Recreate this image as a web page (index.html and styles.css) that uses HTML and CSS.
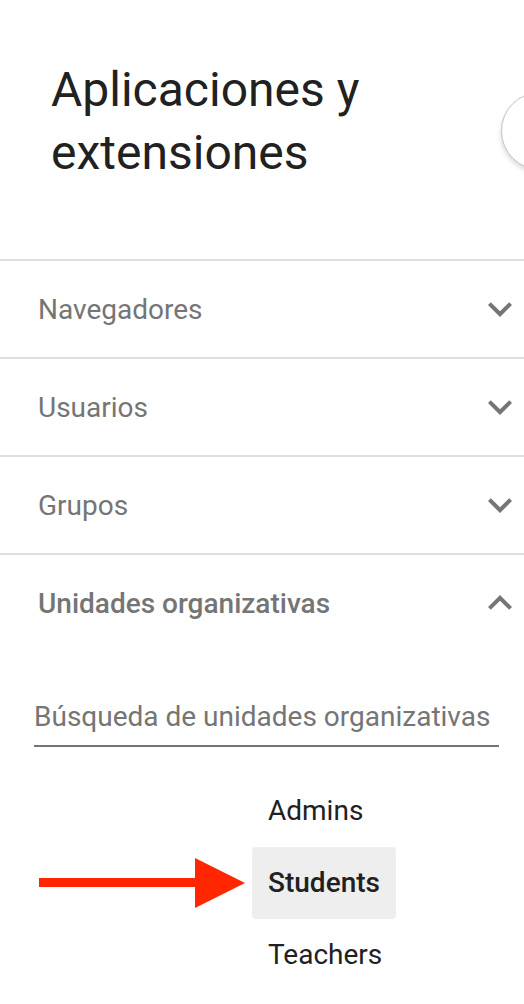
FILE: index.html
```html
<!DOCTYPE html>
<html lang="es">
  <head>
    <meta charset="UTF-8" />
    <meta name="viewport" content="width=device-width, initial-scale=1.0" />
    <title>Aplicaciones y extensiones</title>
    <link rel="stylesheet" href="styles.css">
  </head>
  <body>
    <div class="panel">
      <header class="panel-header">
        <h1>Aplicaciones y extensiones</h1>
        <button class="fab" type="button" aria-label="Más"></button>
      </header>

      <div class="section">
        <span class="section-title">Navegadores</span>
        <svg class="chevron" viewBox="0 0 24 24"><path d="M16.59 8.59L12 13.17 7.41 8.59 6 10l6 6 6-6z" /></svg>
      </div>
      <div class="section">
        <span class="section-title">Usuarios</span>
        <svg class="chevron" viewBox="0 0 24 24"><path d="M16.59 8.59L12 13.17 7.41 8.59 6 10l6 6 6-6z" /></svg>
      </div>
      <div class="section">
        <span class="section-title">Grupos</span>
        <svg class="chevron" viewBox="0 0 24 24"><path d="M16.59 8.59L12 13.17 7.41 8.59 6 10l6 6 6-6z" /></svg>
      </div>
      <div class="section open">
        <span class="section-title">Unidades organizativas</span>
        <svg class="chevron" viewBox="0 0 24 24"><path d="M12 8l-6 6 1.41 1.41L12 10.83l4.59 4.58L18 14z" /></svg>
      </div>

      <div class="org-units">
        <input
          class="search"
          type="text"
          placeholder="Búsqueda de unidades organizativas"
        />
        <ul class="tree">
          <li class="tree-item">Admins</li>
          <li class="tree-item selected">
            <!-- flecha de anotación -->
            <svg class="pointer" width="210" height="50" viewBox="0 0 210 50">
              <rect x="0" y="20" width="157" height="9" />
              <polygon points="156,0 206,25 156,50" />
            </svg>
            Students
          </li>
          <li class="tree-item">Teachers</li>
        </ul>
      </div>
    </div>
  </body>
</html>
```

FILE: styles.css
```css
body {
  margin: 0;
  padding: 0;
  background-color: #fff;
  font-family: Roboto, "Liberation Sans", Arial, sans-serif;
  overflow: hidden;
}
.panel {
  width: 524px;
  position: relative;
  overflow: hidden;
}
.panel-header {
  height: 259px;
  box-sizing: border-box;
  padding: 58px 0 0 51px;
}
.panel-header h1 {
  margin: 0;
  font-size: 48px;
  font-weight: 400;
  line-height: 63px;
  color: #212121;
}
.fab {
  position: absolute;
  left: 501px;
  top: 92px;
  width: 78px;
  height: 78px;
  border-radius: 50%;
  border: 1px solid #c4c4c4;
  background-color: #fff;
  box-shadow: 0 3px 5px rgba(0, 0, 0, 0.15);
}
.section {
  display: flex;
  align-items: center;
  justify-content: space-between;
  height: 96px;
  border-top: 2px solid #e0e0e0;
  padding-left: 38px;
}
.section-title {
  font-size: 28px;
  color: #757575;
}
.section.open .section-title {
  font-weight: 500;
}
.chevron {
  width: 48px;
  height: 48px;
  fill: #757575;
}
.org-units {
  padding: 46px 25px 0 34px;
}
.search {
  display: block;
  width: 100%;
  box-sizing: border-box;
  height: 50px;
  padding: 0 0 10px;
  border: none;
  border-bottom: 2px solid #757575;
  font-family: inherit;
  font-size: 28px;
  color: #212121;
  background-color: transparent;
}
.search::placeholder {
  color: #757575;
}
.search:focus {
  outline: none;
}
.tree {
  list-style: none;
  margin: 28px 0 0 218px;
  padding: 0;
}
.tree-item {
  position: relative;
  display: table;
  height: 72px;
  line-height: 72px;
  padding: 0 16px;
  font-size: 28px;
  color: #212121;
  border-radius: 4px;
}
.tree-item.selected {
  font-weight: 500;
  background-color: #eeeeee;
}
.pointer {
  position: absolute;
  left: -213px;
  top: 11px;
  fill: #ff2600;
}
```
